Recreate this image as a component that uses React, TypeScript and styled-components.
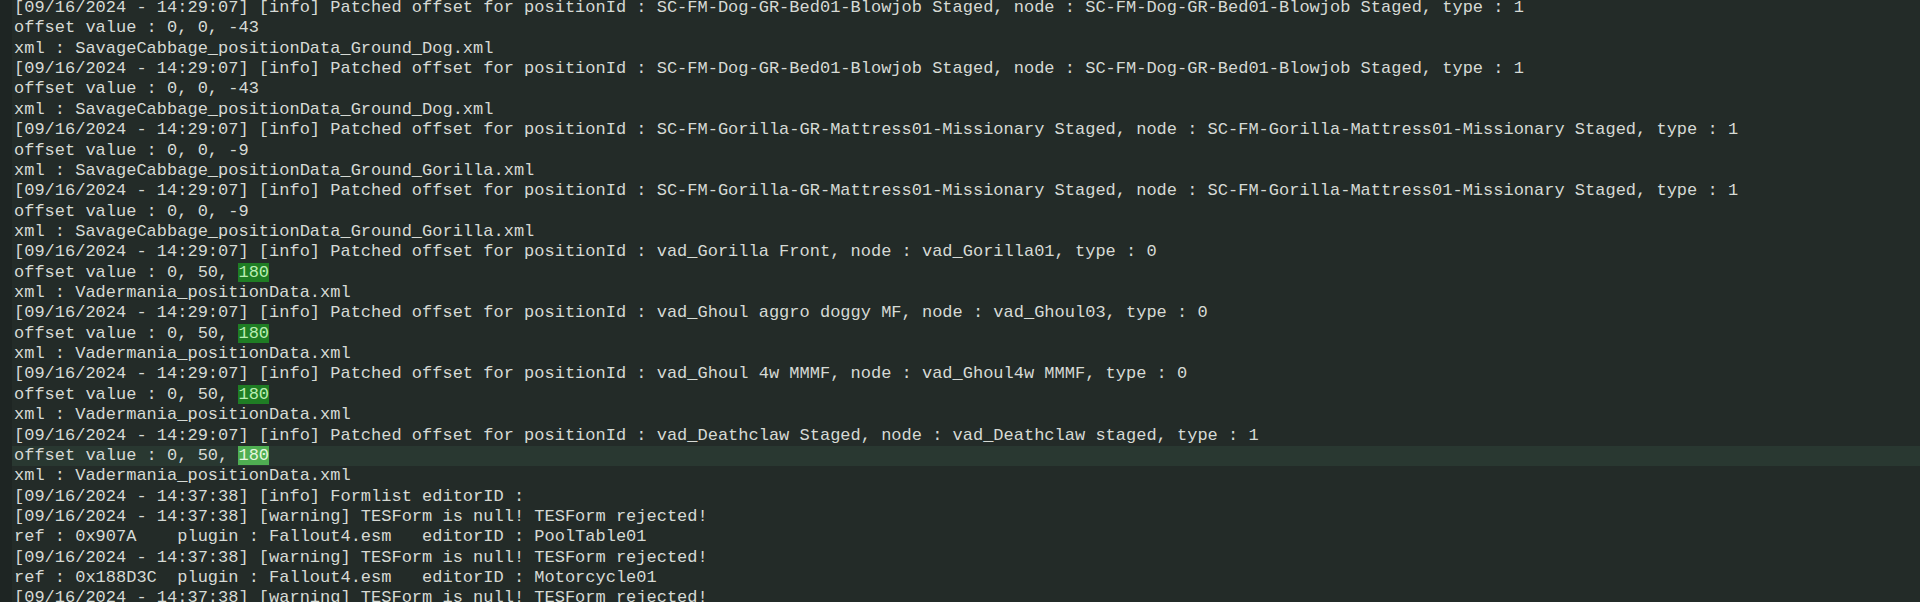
import React from "react";
import styled, { createGlobalStyle } from "styled-components";

const Global = createGlobalStyle`
  html, body {
    margin: 0;
    padding: 0;
    background: #232b28;
    overflow: hidden;
  }
`;

const Editor = styled.div`
  display: flex;
  width: 1920px;
  height: 602px;
  overflow: hidden;
  background: #232b28;
`;

const Gutter = styled.div`
  flex: 0 0 12px;
  background: #1e2523;
`;

const Lines = styled.div`
  flex: 1;
  display: flex;
  flex-direction: column;
  margin-top: -2px;
`;

const Line = styled.div<{ $current?: boolean }>`
  height: 20.36px;
  line-height: 20.36px;
  padding-left: 2px;
  white-space: pre;
  font-family: "Courier New", "Nimbus Mono PS", "Nimbus Mono L", FreeMono, "Liberation Mono", monospace;
  font-size: 17px;
  color: #d6dad5;
  background: ${(p) => (p.$current ? "#293831" : "transparent")};
`;

const Match = styled.span<{ $current?: boolean }>`
  background: ${(p) => (p.$current ? "#4fae52" : "#1f7d24")};
  color: ${(p) => (p.$current ? "#e4f7df" : "#b9eeb2")};
`;

type L = { text: string; match?: string; current?: boolean };

const TS1 = "[09/16/2024 - 14:29:07] [info] Patched offset for positionId : ";
const TS2 = "[09/16/2024 - 14:37:38] ";

const data: L[] = [
  { text: TS1 + "SC-FM-Dog-GR-Bed01-Blowjob Staged, node : SC-FM-Dog-GR-Bed01-Blowjob Staged, type : 1" },
  { text: "offset value : 0, 0, -43" },
  { text: "xml : SavageCabbage_positionData_Ground_Dog.xml" },
  { text: TS1 + "SC-FM-Dog-GR-Bed01-Blowjob Staged, node : SC-FM-Dog-GR-Bed01-Blowjob Staged, type : 1" },
  { text: "offset value : 0, 0, -43" },
  { text: "xml : SavageCabbage_positionData_Ground_Dog.xml" },
  { text: TS1 + "SC-FM-Gorilla-GR-Mattress01-Missionary Staged, node : SC-FM-Gorilla-Mattress01-Missionary Staged, type : 1" },
  { text: "offset value : 0, 0, -9" },
  { text: "xml : SavageCabbage_positionData_Ground_Gorilla.xml" },
  { text: TS1 + "SC-FM-Gorilla-GR-Mattress01-Missionary Staged, node : SC-FM-Gorilla-Mattress01-Missionary Staged, type : 1" },
  { text: "offset value : 0, 0, -9" },
  { text: "xml : SavageCabbage_positionData_Ground_Gorilla.xml" },
  { text: TS1 + "vad_Gorilla Front, node : vad_Gorilla01, type : 0" },
  { text: "offset value : 0, 50, ", match: "180" },
  { text: "xml : Vadermania_positionData.xml" },
  { text: TS1 + "vad_Ghoul aggro doggy MF, node : vad_Ghoul03, type : 0" },
  { text: "offset value : 0, 50, ", match: "180" },
  { text: "xml : Vadermania_positionData.xml" },
  { text: TS1 + "vad_Ghoul 4w MMMF, node : vad_Ghoul4w MMMF, type : 0" },
  { text: "offset value : 0, 50, ", match: "180" },
  { text: "xml : Vadermania_positionData.xml" },
  { text: TS1 + "vad_Deathclaw Staged, node : vad_Deathclaw staged, type : 1" },
  { text: "offset value : 0, 50, ", match: "180", current: true },
  { text: "xml : Vadermania_positionData.xml" },
  { text: TS2 + "[info] Formlist editorID :" },
  { text: TS2 + "[warning] TESForm is null! TESForm rejected!" },
  { text: "ref : 0x907A    plugin : Fallout4.esm   editorID : PoolTable01" },
  { text: TS2 + "[warning] TESForm is null! TESForm rejected!" },
  { text: "ref : 0x188D3C  plugin : Fallout4.esm   editorID : Motorcycle01" },
  { text: TS2 + "[warning] TESForm is null! TESForm rejected!" },
];

export default function App() {
  return (
    <>
      <Global />
      <Editor>
        <Gutter />
        <Lines>
          {data.map((l, i) => (
            <Line key={i} $current={l.current}>
              {l.text}
              {l.match && <Match $current={l.current}>{l.match}</Match>}
            </Line>
          ))}
        </Lines>
      </Editor>
    </>
  );
}
